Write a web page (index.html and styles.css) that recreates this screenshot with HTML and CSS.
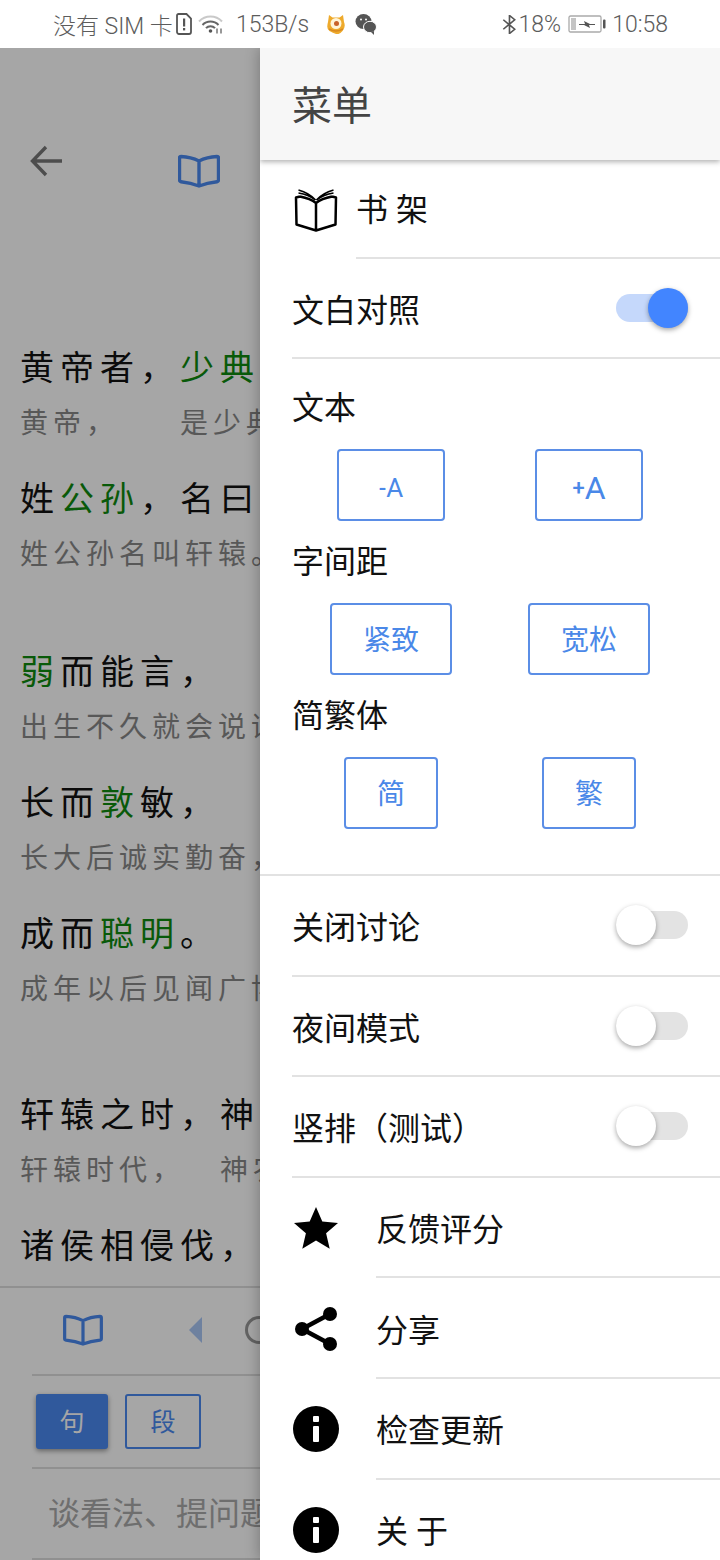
FILE: index.html
```html
<!DOCTYPE html>
<html lang="zh-CN">
<head>
  <meta charset="UTF-8" />
  <meta name="viewport" content="width=device-width, initial-scale=1" />
  <title>菜单</title>
  <link rel="stylesheet" href="styles.css">
</head>
<body>

<div class="status-bar">
  <div class="status-group">
    <span>没有 SIM 卡</span>
    <svg class="ic-sim" viewBox="0 0 16 22"><path d="M2.500 1h8L15 5.500V19a2 2 0 0 1-2 2H3a2 2 0 0 1-2-2V2.500A1.500 1.500 0 0 1 2.500 1z" fill="none" stroke="#555" stroke-width="1.800"/><rect x="7" y="5.500" width="2.200" height="8" fill="#555"/><rect x="7" y="15" width="2.200" height="2.400" fill="#555"/></svg>
    <svg class="ic-wifi" viewBox="0 0 26 20"><path d="M1 7.500a16 16 0 0 1 23 0" fill="none" stroke="#c9c9c9" stroke-width="2"/><path d="M4.500 11a11 11 0 0 1 16 0" fill="none" stroke="#666" stroke-width="2"/><path d="M8 14.200a6 6 0 0 1 9 0" fill="none" stroke="#666" stroke-width="2"/><circle cx="12.500" cy="17" r="1.800" fill="#555"/><path d="M19 14.500v5M23 14.500v5" stroke="#777" stroke-width="1.500"/></svg>
    <span class="net-speed">153B/s</span>
    <svg class="ic-app" viewBox="0 0 20 20"><path d="M3 1l3.500 2.500h7L17 1l1 7q2 5-1.500 9T10 20t-6.500-3T2 8z" fill="#eeaa2c"/><circle cx="10" cy="9.500" r="5.500" fill="#fff4d8"/><circle cx="10.500" cy="9.500" r="2.500" fill="#c9622a"/><path d="M3 15q7 4 14 0" fill="none" stroke="#d98a20" stroke-width="1.500"/></svg>
    <svg class="ic-wechat" viewBox="0 0 22 22"><ellipse cx="8.500" cy="8.500" rx="8" ry="7.500" fill="#555"/><ellipse cx="15" cy="14" rx="6.500" ry="5.700" fill="#555" stroke="#fff" stroke-width="1"/><path d="M16 19l3 3v-4z" fill="#555"/><circle cx="6" cy="6.500" r="1" fill="#fff"/><circle cx="11" cy="6.500" r="1" fill="#fff"/></svg>
  </div>
  <div class="status-group">
    <svg class="ic-bt" viewBox="0 0 14 20"><path d="M1 5l12 10-5.500 4.500V.5L13 5 1 15" fill="none" stroke="#555" stroke-width="1.700"/></svg>
    <span>18%</span>
    <svg class="ic-battery" viewBox="0 0 38 18"><rect x="1" y="1" width="32" height="16" rx="1.500" fill="none" stroke="#aaa" stroke-width="1.300"/><rect x="3" y="3" width="5" height="12" fill="#c4c4c4"/><rect x="35" y="4.500" width="2.500" height="9" rx="1" fill="#555"/><path d="M11 9h6l-1-3 6 3h5v1h-6l1 3-6-3h-5z" fill="#555"/></svg>
    <span>10:58</span>
  </div>
</div>

<div class="reader">
  <div class="top-nav">
    <svg class="ic-back" viewBox="0 0 34 34"><path d="M32 17H3M16 3L2.500 17 16 31" fill="none" stroke="#777" stroke-width="3.400"/></svg>
    <svg class="ic-openbook" viewBox="0 0 42 34"><path d="M21 7Q13 3 3 2.500Q1.500 2.500 1.500 4V26Q1.500 27.500 3 27.800Q13 29 21 32Q29 29 39 27.800Q40.500 27.500 40.500 26V4Q40.500 2.500 39 2.500Q29 3 21 7zM21 7V32" fill="none" stroke="#4a89f0" stroke-width="3.400" stroke-linejoin="round"/></svg>
  </div>

  <div class="article">
    <div class="para">
      <div class="verse">
        <p class="orig">黄帝者，<em>少典</em>之子，</p>
        <p class="trans">黄帝，<span class="gap-wide">是少典之子，</span></p>
      </div>
      <div class="verse">
        <p class="orig">姓<em>公孙</em>，名曰轩辕。</p>
        <p class="trans">姓公孙名叫轩辕。</p>
      </div>
    </div>
    <div class="para">
      <div class="verse">
        <p class="orig"><em>弱</em>而能言，</p>
        <p class="trans">出生不久就会说话，</p>
      </div>
      <div class="verse">
        <p class="orig">长而<em>敦</em>敏，</p>
        <p class="trans">长大后诚实勤奋，</p>
      </div>
      <div class="verse">
        <p class="orig">成而<em>聪明</em>。</p>
        <p class="trans">成年以后见闻广博。</p>
      </div>
    </div>
    <div class="para">
      <div class="verse">
        <p class="orig">轩辕之时，神农氏衰，</p>
        <p class="trans">轩辕时代，<span class="gap-narrow">神农氏衰落，</span></p>
      </div>
      <div class="verse">
        <p class="orig">诸侯相侵伐，</p>
      </div>
    </div>
  </div>

  <div class="toolbar">
    <div class="tool-row tool-row-nav">
      <svg class="ic-openbook ic-openbook-sm" viewBox="0 0 42 34"><path d="M21 7Q13 3 3 2.500Q1.500 2.500 1.500 4V26Q1.500 27.500 3 27.800Q13 29 21 32Q29 29 39 27.800Q40.500 27.500 40.500 26V4Q40.500 2.500 39 2.500Q29 3 21 7zM21 7V32" fill="none" stroke="#4a89f0" stroke-width="3.400" stroke-linejoin="round"/></svg>
      <span class="tri"></span>
      <span class="ring"></span>
    </div>
    <div class="tool-row tool-row-btns">
      <span class="mode-btn mode-on">句</span>
      <span class="mode-btn">段</span>
    </div>
    <div class="tool-row tool-row-input">谈看法、提问题</div>
  </div>
</div>

<div class="scrim"></div>

<aside class="drawer">
  <header class="drawer-head">菜单</header>

  <div class="menu-item menu-item-shelf">
    <svg class="ic-shelf" viewBox="0 0 44 44"><path d="M21.500 12C17 7 10 3.500 4.500 2M21.500 12C17 8.500 11 6 4.500 5M22.500 12C27 7 34 3.500 39.500 2M22.500 12C27 8.500 33 6 39.500 5" fill="none" stroke="#000" stroke-width="1.700"/><path d="M6 8.500L2 9.500 2.500 36.500 22 42.500 41.500 36.500 42 9.500 38 8.500M22 15C17 11 11 9.500 6 8.500M22 15C27 11 33 9.500 38 8.500M22 15V42.500" fill="none" stroke="#000" stroke-width="2.500" stroke-linejoin="round"/></svg>
    <div class="menu-body menu-body-shelf"><span>书 架</span></div>
  </div>

  <div class="menu-row menu-row-first">
    <span>文白对照</span>
    <span class="switch switch-on"><span class="knob"></span></span>
  </div>

  <div class="settings">
    <div class="settings-title">文本</div>
    <div class="btn-pair">
      <span class="opt-btn opt-a"><span class="opt-sign">-</span>A</span>
      <span class="opt-btn opt-a opt-a-big"><span class="opt-sign">+</span>A</span>
    </div>
    <div class="settings-title">字间距</div>
    <div class="btn-pair">
      <span class="opt-btn opt-wide">紧致</span>
      <span class="opt-btn opt-wide">宽松</span>
    </div>
    <div class="settings-title">简繁体</div>
    <div class="btn-pair">
      <span class="opt-btn opt-small">简</span>
      <span class="opt-btn opt-small">繁</span>
    </div>
  </div>

  <div class="menu-row">
    <span>关闭讨论</span>
    <span class="switch"><span class="knob"></span></span>
  </div>
  <div class="menu-row">
    <span>夜间模式</span>
    <span class="switch"><span class="knob"></span></span>
  </div>
  <div class="menu-row">
    <span>竖排（测试）</span>
    <span class="switch"><span class="knob"></span></span>
  </div>

  <div class="menu-item">
    <svg class="ic-menu" viewBox="0 0 46 46"><path d="M23 2l6.300 14.600 15.700 1.400-11.900 10.300 3.600 15.500L23 35.600 9.300 43.800l3.600-15.500L1 18l15.700-1.400z" fill="#000"/></svg>
    <div class="menu-body">反馈评分</div>
  </div>
  <div class="menu-item">
    <svg class="ic-menu" viewBox="0 0 46 46"><path d="M37 8L9 23l28 15" fill="none" stroke="#000" stroke-width="4.500"/><circle cx="37" cy="8" r="7" fill="#000"/><circle cx="9" cy="23" r="7" fill="#000"/><circle cx="37" cy="38" r="7" fill="#000"/></svg>
    <div class="menu-body">分享</div>
  </div>
  <div class="menu-item">
    <svg class="ic-menu" viewBox="0 0 46 46"><circle cx="23" cy="23" r="23" fill="#000"/><rect x="20" y="10" width="6" height="6" rx="1" fill="#fff"/><rect x="20" y="20" width="6" height="16" rx="1" fill="#fff"/></svg>
    <div class="menu-body">检查更新</div>
  </div>
  <div class="menu-item">
    <svg class="ic-menu" viewBox="0 0 46 46"><circle cx="23" cy="23" r="23" fill="#000"/><rect x="20" y="10" width="6" height="6" rx="1" fill="#fff"/><rect x="20" y="20" width="6" height="16" rx="1" fill="#fff"/></svg>
    <div class="menu-body">关 于</div>
  </div>
</aside>

</body>
</html>
```

FILE: styles.css
```css
* { box-sizing: border-box; }

html, body {
  height: 1560px;
}

body {
  position: relative;
  margin: 0;
  overflow: hidden;
  background: #fff;
  color: #111;
  font-family: Roboto, "Noto Sans CJK SC", sans-serif;
}

p { margin: 0; }

/* status bar */
.status-bar {
  position: relative;
  z-index: 3;
  display: flex;
  justify-content: space-between;
  align-items: center;
  height: 48px;
  padding: 0 52px 0 53px;
  background: #fff;
  color: #5c5c5c;
  font-size: 23px;
  font-weight: 300;
  white-space: nowrap;
}

.status-group {
  display: flex;
  align-items: center;
}

.ic-sim { width: 16px; height: 22px; margin-left: 3px; }
.ic-wifi { width: 26px; height: 20px; margin-left: 6px; }
.net-speed { margin-left: 12px; }
.ic-app { width: 20px; height: 20px; margin-left: 17px; }
.ic-wechat { width: 22px; height: 22px; margin-left: 9px; }
.ic-bt { width: 14px; height: 19px; margin-right: 3px; }
.ic-battery { width: 38px; height: 18px; margin: 0 6px 0 7px; }

/* page behind the drawer */
.reader {
  height: 1512px;
  overflow: hidden;
  background: #fff;
}

.top-nav {
  display: flex;
  align-items: flex-start;
  height: 295px;
  padding: 96px 0 0 30px;
}

.ic-back { width: 34px; height: 34px; }
.ic-openbook { width: 42px; height: 34px; margin: 10px 0 0 114px; }

.article {
  height: 943px;
  padding-left: 20px;
  white-space: nowrap;
}

.para { padding-bottom: 42px; }
.para:nth-child(2) { padding-bottom: 50px; }

.verse { padding-bottom: 30px; }

.orig {
  height: 50px;
  margin-bottom: 11px;
  font-size: 34px;
  letter-spacing: 6px;
  line-height: 50px;
  color: #111;
}

.orig em {
  font-style: normal;
  color: #0f8a0f;
}

.trans {
  height: 40px;
  font-size: 28px;
  letter-spacing: 5px;
  line-height: 40px;
  color: #888;
}

.gap-wide { margin-left: 61px; }
.gap-narrow { margin-left: 35px; }

.toolbar {
  border-top: 2px solid #ddd;
}

.tool-row {
  display: flex;
  align-items: center;
  margin-left: 32px;
  border-bottom: 2px solid #ddd;
}

.tool-row-nav {
  height: 88px;
  padding-bottom: 3px;
}

.ic-openbook-sm {
  width: 40px;
  height: 32px;
  margin: 0 0 0 31px;
}

.tri {
  width: 0;
  height: 0;
  margin-left: 86px;
  border-top: 13px solid transparent;
  border-bottom: 13px solid transparent;
  border-right: 13px solid #a9c6f5;
}

.ring {
  width: 28px;
  height: 28px;
  margin-left: 43px;
  border: 3px solid #999;
  border-radius: 50%;
}

.tool-row-btns {
  gap: 17px;
  height: 93px;
  padding-left: 4px;
}

.mode-btn {
  display: flex;
  justify-content: center;
  align-items: center;
  width: 76px;
  height: 55px;
  padding-bottom: 4px;
  border: 2px solid #4a89f0;
  border-radius: 3px;
  color: #4a89f0;
  font-size: 25px;
}

.mode-on {
  width: 72px;
  background: #4a89f0;
  color: #fff;
  box-shadow: 0 2px 5px rgba(0, 0, 0, 0.4);
}

.tool-row-input {
  height: 91px;
  padding: 0 0 5px 16px;
  color: #aaa;
  font-size: 32px;
  white-space: nowrap;
}

.scrim {
  position: absolute;
  z-index: 1;
  top: 48px;
  left: 0;
  right: 0;
  bottom: 0;
  background: rgba(0, 0, 0, 0.35);
}

/* drawer */
.drawer {
  position: absolute;
  z-index: 2;
  top: 48px;
  left: 260px;
  right: 0;
  bottom: 0;
  overflow: hidden;
  background: #fff;
  box-shadow: 0 0 14px rgba(0, 0, 0, 0.3);
  font-size: 32px;
  color: #111;
  white-space: nowrap;
}

.drawer-head {
  position: relative;
  height: 112px;
  padding: 3px 0 0 32px;
  background: #f7f7f7;
  box-shadow: 0 2px 5px rgba(0, 0, 0, 0.3);
  color: #444;
  font-size: 40px;
  line-height: 112px;
}

.menu-item {
  display: flex;
  align-items: center;
  height: 100.6px;
  padding-left: 33px;
}

.menu-item-shelf { height: 99px; }

.ic-menu { flex: none; width: 46px; height: 46px; margin-right: 37px; }
.ic-shelf { flex: none; width: 44px; height: 44px; margin: 0 18px 0 1px; }

.menu-body {
  display: flex;
  align-items: center;
  flex: 1;
  height: 100%;
  border-bottom: 2px solid #e2e2e2;
}

.menu-body-shelf { padding-bottom: 4px; }

.menu-row {
  display: flex;
  justify-content: space-between;
  align-items: center;
  height: 100.6px;
  margin-left: 32px;
  padding-right: 32px;
  border-bottom: 2px solid #e2e2e2;
}

.menu-row-first { height: 100px; }

.switch {
  display: flex;
  align-items: center;
  width: 72px;
  height: 28px;
  border-radius: 14px;
  background: #e3e3e3;
}

.knob {
  flex: none;
  width: 40px;
  height: 40px;
  border-radius: 50%;
  background: #fff;
  box-shadow: 0 2px 5px rgba(0, 0, 0, 0.35);
}

.switch-on {
  justify-content: flex-end;
  background: #c5d8fb;
}

.switch-on .knob { background: #4285ff; }

.settings {
  padding: 27px 0 45px 32px;
  border-bottom: 2px solid #e2e2e2;
}

.settings-title {
  height: 44px;
  margin-bottom: 19px;
  line-height: 44px;
}

.btn-pair {
  display: grid;
  grid-template-columns: 198px 198px;
  justify-items: center;
  margin-bottom: 19px;
}

.btn-pair:last-child { margin-bottom: 0; }

.opt-btn {
  display: flex;
  justify-content: center;
  align-items: center;
  height: 72px;
  padding-bottom: 3px;
  border: 2px solid #5b8ee6;
  border-radius: 4px;
  color: #4a88e8;
  font-size: 28px;
}

.opt-a {
  width: 108px;
  padding: 6px 0 0;
  font-size: 26px;
}

.opt-a-big { font-size: 32px; padding-top: 5px; }
.opt-sign { font-size: 22px; font-weight: 500; }
.opt-wide { width: 122px; }
.opt-small { width: 94px; }
```
